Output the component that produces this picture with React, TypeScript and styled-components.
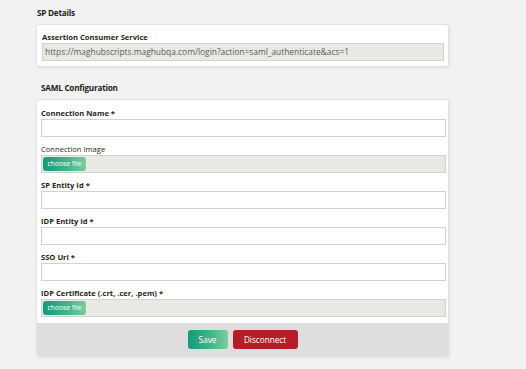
import React from "react";
import styled, { createGlobalStyle } from "styled-components";

const GlobalStyle = createGlobalStyle`
  body {
    margin: 0;
    background: #f2f2f2;
    font-family: "Open Sans", "Liberation Sans", sans-serif;
    color: #222;
  }
`;

const Page = styled.div`
  width: 413px;
  padding: 6px 0 12px 36px;
`;

const SectionTitle = styled.h2<{ $indent?: number; $top?: number }>`
  margin: ${({ $top }) => $top ?? 0}px 0 4px ${({ $indent }) => $indent ?? 1}px;
  font-size: 8.2px;
  line-height: 14px;
  font-weight: 700;
  letter-spacing: -0.25px;
  color: #1e1e1e;
`;

const Card = styled.div`
  background: #fff;
  border: 1px solid #e2e2e2;
  border-radius: 3px;
  box-shadow: 1px 1px 3px rgba(0, 0, 0, 0.08);
  overflow: hidden;
`;

const CardBody = styled.div<{ $pad: string }>`
  display: flex;
  flex-direction: column;
  gap: 6px;
  padding: ${({ $pad }) => $pad};
`;

const Field = styled.div`
  display: flex;
  flex-direction: column;
`;

const Label = styled.label<{ $bold?: boolean }>`
  font-size: 7.6px;
  line-height: 12px;
  font-weight: ${({ $bold }) => ($bold ? 700 : 400)};
  color: #1f1f1f;
  white-space: nowrap;
`;

const TextInput = styled.div<{ $readOnly?: boolean }>`
  box-sizing: border-box;
  height: 18px;
  border: 1px solid #d2d2d2;
  background: ${({ $readOnly }) => ($readOnly ? "#e9e9e4" : "#fff")};
  font-size: 8.4px;
  line-height: 16px;
  padding: 0 2px;
  color: #5a5a5a;
  white-space: nowrap;
  overflow: hidden;
`;

const FileInput = styled.div`
  box-sizing: border-box;
  height: 18px;
  border: 1px solid #d2d2d2;
  background: #e9e9e4;
  padding: 1px 0 1px 1px;
  display: flex;
`;

const GreenButton = styled.button`
  border: none;
  border-radius: 3px;
  background: linear-gradient(90deg, #159a78 0%, #3fb489 55%, #7ccda0 100%);
  color: #fff;
  font-family: inherit;
  cursor: pointer;
`;

const ChooseFile = styled(GreenButton)`
  width: 43px;
  height: 14px;
  padding: 0;
  font-size: 6.8px;
  line-height: 14px;
`;

const Footer = styled.div`
  background: #dedede;
  height: 33px;
  display: flex;
  justify-content: center;
  align-items: center;
  gap: 5px;
`;

const SaveButton = styled(GreenButton)`
  width: 40px;
  height: 19px;
  font-size: 8.4px;
  padding: 0;
`;

const DangerButton = styled.button`
  width: 65px;
  height: 19px;
  padding: 0;
  border: none;
  border-radius: 3px;
  background: #b51d27;
  color: #fff;
  font-family: inherit;
  font-size: 8.2px;
  cursor: pointer;
`;

const fields: { label: string; bold: boolean; file?: boolean }[] = [
  { label: "Connection Name *", bold: true },
  { label: "Connection Image", bold: false, file: true },
  { label: "SP Entity Id *", bold: true },
  { label: "IDP Entity Id *", bold: true },
  { label: "SSO Url *", bold: true },
  { label: "IDP Certificate (.crt, .cer, .pem) *", bold: true, file: true },
];

export default function App() {
  return (
    <>
      <GlobalStyle />
      <Page>
        <SectionTitle>SP Details</SectionTitle>
        <Card>
          <CardBody $pad="6px 4px 5px 5px">
            <Field>
              <Label $bold>Assertion Consumer Service</Label>
              <TextInput $readOnly>
                https://maghubscripts.maghubqa.com/login?action=saml_authenticate&amp;acs=1
              </TextInput>
            </Field>
          </CardBody>
        </Card>

        <SectionTitle $indent={5} $top={14}>
          SAML Configuration
        </SectionTitle>
        <Card>
          <CardBody $pad="7px 2px 6px 4px">
            {fields.map((f) => (
              <Field key={f.label}>
                <Label $bold={f.bold}>{f.label}</Label>
                {f.file ? (
                  <FileInput>
                    <ChooseFile>choose file</ChooseFile>
                  </FileInput>
                ) : (
                  <TextInput />
                )}
              </Field>
            ))}
          </CardBody>
          <Footer>
            <SaveButton>Save</SaveButton>
            <DangerButton>Disconnect</DangerButton>
          </Footer>
        </Card>
      </Page>
    </>
  );
}
